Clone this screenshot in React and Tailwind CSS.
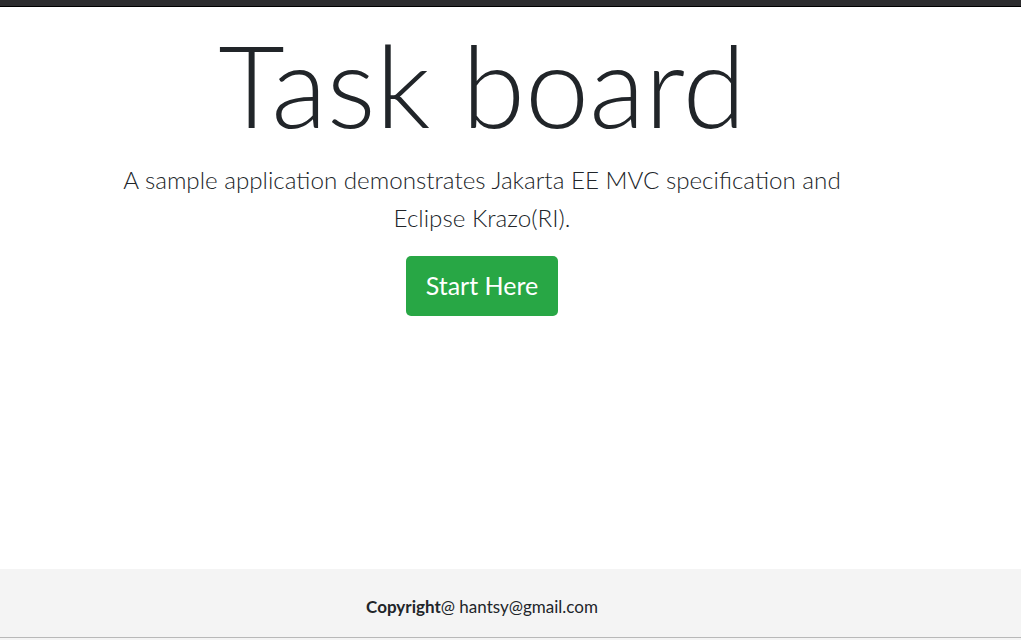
export default function App() {
  return (
    <div className="h-screen w-full flex flex-col bg-white overflow-hidden" style={{ fontFamily: 'Lato, sans-serif' }}>
      <div className="h-[7px] bg-[#2d2d2f] border-b border-black shrink-0" />
      <main className="flex-1 w-[964px] flex flex-col items-center text-[#212529]">
        <h1 className="mt-[4px] text-[115px] leading-[144px] font-light">Task board</h1>
        <p className="mt-[6px] text-[24.2px] leading-[37.5px] font-light text-center">
          A sample application demonstrates Jakarta EE MVC specification and
          <br />
          Eclipse Krazo(RI).
        </p>
        <button className="mt-[20px] w-[152px] h-[60px] rounded-[5px] bg-[#28a745] text-white text-[25px]">
          Start Here
        </button>
      </main>
      <footer className="h-[68px] shrink-0 bg-[#f4f4f4] flex items-center pt-[7px]">
        <div className="w-[964px] text-center text-[17px] text-[#212529]">
          <span className="font-bold">Copyright</span>@ hantsy@gmail.com
        </div>
      </footer>
      <div className="h-[3px] shrink-0 bg-[#f4f4f4] border-t border-[#b8b8b8]" />
    </div>
  );
}
